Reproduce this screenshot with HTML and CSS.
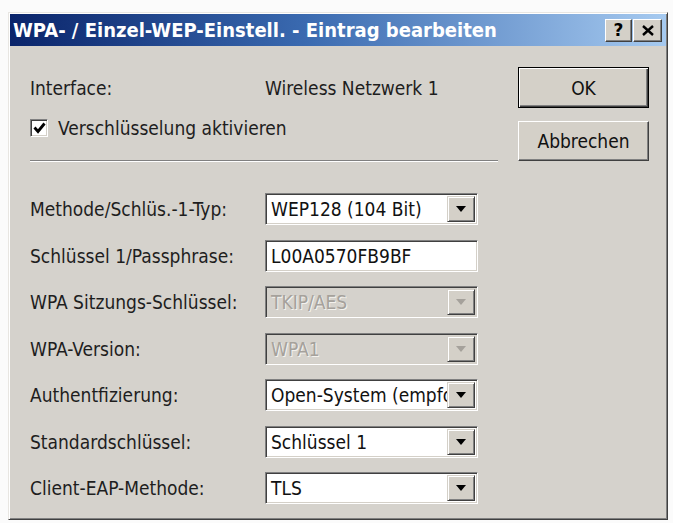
FILE: index.html
```html
<!DOCTYPE html>
<html lang="de">
<head>
<meta charset="utf-8">
<title>WPA- / Einzel-WEP-Einstell. - Eintrag bearbeiten</title>
<link rel="stylesheet" href="styles.css">
</head>
<body>
<div class="dialog">
  <div class="titlebar">
    <span class="title">WPA- / Einzel-WEP-Einstell. - Eintrag bearbeiten</span>
    <div class="tbtns">
      <span class="tbtn help">?</span>
      <span class="tbtn close">
        <svg width="12" height="11" viewBox="0 0 12 11"><path d="M1 1 L11 10 M11 1 L1 10" stroke="#000" stroke-width="2.4"/></svg>
      </span>
    </div>
  </div>
  <div class="body">
    <div class="main">
      <div class="info">
        <span class="info-lbl">Interface:</span>
        <span class="info-val">Wireless Netzwerk 1</span>
      </div>
      <div class="check">
        <span class="box">
          <svg width="13" height="12" viewBox="0 0 13 12"><path d="M1.5 5.5 L5 9.5 L11.5 1.5" fill="none" stroke="#000" stroke-width="2.8"/></svg>
        </span>
        <span>Verschlüsselung aktivieren</span>
      </div>
      <div class="sep"></div>
      <div class="form">
        <span class="lbl">Methode/Schlüs.-1-Typ:</span>
        <div class="combo"><span class="val">WEP128 (104 Bit)</span><span class="arrow"><i></i></span></div>

        <span class="lbl">Schlüssel 1/Passphrase:</span>
        <div class="edit"><span class="val">L00A0570FB9BF</span></div>

        <span class="lbl">WPA Sitzungs-Schlüssel:</span>
        <div class="combo disabled"><span class="val">TKIP/AES</span><span class="arrow"><i></i></span></div>

        <span class="lbl">WPA-Version:</span>
        <div class="combo disabled"><span class="val">WPA1</span><span class="arrow"><i></i></span></div>

        <span class="lbl">Authentfizierung:</span>
        <div class="combo"><span class="val">Open-System (empfohlen)</span><span class="arrow"><i></i></span></div>

        <span class="lbl">Standardschlüssel:</span>
        <div class="combo"><span class="val">Schlüssel 1</span><span class="arrow"><i></i></span></div>

        <span class="lbl">Client-EAP-Methode:</span>
        <div class="combo"><span class="val">TLS</span><span class="arrow"><i></i></span></div>
      </div>
    </div>
    <div class="buttons">
      <div class="btn default"><span>OK</span></div>
      <div class="btn"><span>Abbrechen</span></div>
    </div>
  </div>
</div>
</body>
</html>
```

FILE: styles.css
```css
html, body {
  margin: 0;
  padding: 0;
  background: #fbfbfb;
}
body {
  padding: 12px 0 0 8px;
  font-family: "DejaVu Sans Condensed", "DejaVu Sans", sans-serif;
  font-size: 19px;
  color: #1e1e1e;
}
.dialog {
  width: 660px;
  height: 508px;
  box-sizing: border-box;
  background: #d5d2cc;
  border: 1px solid;
  border-color: #e8e6e2 #404040 #404040 #e8e6e2;
  box-shadow: inset 1px 1px #ffffff, inset -1px -1px #808080;
  padding: 1px;
}
.titlebar {
  height: 32px;
  display: flex;
  align-items: center;
  justify-content: space-between;
  background: linear-gradient(to right, #0a246a 0%, #3a6ab0 45%, #a6caf0 100%);
  padding: 0 4px 0 3px;
}
.title {
  color: #fff;
  font-weight: bold;
  font-size: 20px;
  white-space: nowrap;
}
.tbtns {
  display: flex;
  gap: 1px;
}
.tbtn {
  width: 27px;
  height: 23px;
  box-sizing: border-box;
  background: #d4d0c8;
  border: 1px solid;
  border-color: #ffffff #404040 #404040 #ffffff;
  box-shadow: inset -1px -1px #808080;
  display: flex;
  align-items: center;
  justify-content: center;
  font-family: "DejaVu Sans", sans-serif;
  font-weight: bold;
  font-size: 17px;
  color: #000;
}
.tbtn.close { width: 29px; }
.body {
  display: flex;
  padding: 0 0 0 20px;
}
.main {
  width: 468px;
  display: flex;
  flex-direction: column;
  padding-top: 30px;
}
.info {
  display: flex;
  height: 24px;
  align-items: center;
}
.info-lbl { width: 235px; }
.check {
  margin-top: 16px;
  height: 24px;
  display: flex;
  align-items: center;
  gap: 10px;
}
.box {
  width: 18px;
  height: 18px;
  box-sizing: border-box;
  background: #fff;
  border: 1px solid;
  border-color: #808080 #ffffff #ffffff #808080;
  box-shadow: inset 1px 1px #404040, inset -1px -1px #d4d0c8;
  display: flex;
  align-items: center;
  justify-content: center;
}
.sep {
  margin-top: 20px;
  height: 1px;
  background: #808080;
  border-bottom: 1px solid #ffffff;
}
.form {
  margin-top: 31px;
  display: grid;
  grid-template-columns: 235px 213px;
  grid-auto-rows: 32px;
  row-gap: 14.5px;
  align-items: center;
}
.lbl { white-space: nowrap; }
.combo, .edit {
  height: 32px;
  box-sizing: border-box;
  background: #fff;
  border: 1px solid;
  border-color: #808080 #ffffff #ffffff #808080;
  box-shadow: inset 1px 1px #404040, inset -1px -1px #d4d0c8;
  display: flex;
  align-items: center;
  padding: 2px;
  overflow: hidden;
}
.val {
  flex: 1;
  min-width: 0;
  padding-left: 3px;
  white-space: nowrap;
  overflow: hidden;
  text-overflow: clip;
  color: #111;
}
.arrow {
  width: 28px;
  height: 100%;
  flex: none;
  box-sizing: border-box;
  background: #d4d0c8;
  border: 1px solid;
  border-color: #d4d0c8 #404040 #404040 #d4d0c8;
  box-shadow: inset 1px 1px #ffffff, inset -1px -1px #808080;
  display: flex;
  align-items: center;
  justify-content: center;
}
.arrow i {
  width: 0;
  height: 0;
  border-left: 5px solid transparent;
  border-right: 5px solid transparent;
  border-top: 6px solid #000;
}
.disabled { background: #d5d2cc; }
.disabled .val { color: #a5a19b; text-shadow: 1px 1px #f4f2ee; }
.disabled .arrow i { border-top-color: #a5a19b; }
.buttons {
  margin-left: 20px;
  padding-top: 21px;
  display: flex;
  flex-direction: column;
  gap: 13px;
}
.btn {
  width: 131px;
  height: 40px;
  box-sizing: border-box;
  background: #d4d0c8;
  border: 1px solid;
  border-color: #ffffff #404040 #404040 #ffffff;
  box-shadow: inset -1px -1px #808080;
  display: flex;
  align-items: center;
  justify-content: center;
  color: #111;
}
.btn.default {
  height: 41px;
  border: 1px solid #000;
  box-shadow: inset 1px 1px #ffffff, inset -1px -1px #404040, inset -2px -2px #808080;
}
```
